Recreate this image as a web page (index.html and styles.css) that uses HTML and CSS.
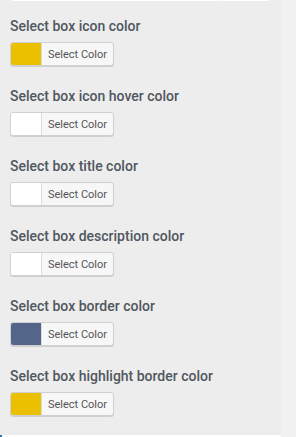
FILE: index.html
```html
<!DOCTYPE html>
<html lang="en">
<head>
    <meta charset="UTF-8">
    <meta name="viewport" content="width=device-width, initial-scale=1.0">
    <title>Select box colors</title>
    <link rel="stylesheet" href="styles.css">
</head>
<body>
    <div class="page">
        <div class="panel">
            <div class="top-line">
                <span class="seg seg-a"></span>
                <span class="seg seg-b"></span>
            </div>

            <div class="field">
                <h3>Select box icon color</h3>
                <button class="color-result" type="button">
                    <span class="swatch swatch-yellow"></span>
                    <span class="label">Select Color</span>
                </button>
            </div>

            <div class="field">
                <h3>Select box icon hover color</h3>
                <button class="color-result" type="button">
                    <span class="swatch"></span>
                    <span class="label">Select Color</span>
                </button>
            </div>

            <div class="field">
                <h3>Select box title color</h3>
                <button class="color-result" type="button">
                    <span class="swatch"></span>
                    <span class="label">Select Color</span>
                </button>
            </div>

            <div class="field">
                <h3>Select box description color</h3>
                <button class="color-result" type="button">
                    <span class="swatch"></span>
                    <span class="label">Select Color</span>
                </button>
            </div>

            <div class="field">
                <h3>Select box border color</h3>
                <button class="color-result" type="button">
                    <span class="swatch swatch-blue"></span>
                    <span class="label">Select Color</span>
                </button>
            </div>

            <div class="field">
                <h3>Select box highlight border color</h3>
                <button class="color-result" type="button">
                    <span class="swatch swatch-yellow"></span>
                    <span class="label">Select Color</span>
                </button>
            </div>
        </div>
        <div class="bottom-line"><span class="dot"></span></div>
    </div>
</body>
</html>
```

FILE: styles.css
```css
body {
    margin: 0;
    background-color: #f1f1f1;
    font-family: Roboto, "Liberation Sans", Arial, sans-serif;
}
.page {
    width: 281px;
}
.panel {
    background-color: #ededed;
    height: 435px;
    box-sizing: border-box;
    padding: 0 10px;
}
.top-line {
    display: flex;
    height: 1px;
    margin-left: 2px;
    margin-bottom: 15px;
}
.seg {
    display: block;
    height: 1px;
    background-color: #fff;
}
.seg-a {
    width: 210px;
}
.seg-b {
    width: 46px;
    margin-left: 1px;
}
.field {
    margin-bottom: 20px;
}
.field h3 {
    margin: 0 0 6px;
    font-size: 14px;
    line-height: 20px;
    font-weight: 500;
    color: #50575e;
}
.color-result {
    display: flex;
    align-items: stretch;
    height: 24px;
    width: 104px;
    padding: 0;
    margin: 0;
    border: 1px solid #d0d0d0;
    border-radius: 3px;
    background-color: #f7f7f7;
    box-shadow: 0 1px 0 #cfcfcf;
    overflow: hidden;
    cursor: pointer;
    font-family: Roboto, "Liberation Sans", Arial, sans-serif;
}
.swatch {
    display: block;
    width: 30px;
    flex: none;
    background-color: #fff;
}
.swatch-yellow {
    background-color: #ebc000;
}
.swatch-blue {
    background-color: #536589;
}
.label {
    flex: 1;
    display: flex;
    align-items: center;
    justify-content: center;
    border-left: 1px solid #dcdcdc;
    font-size: 11px;
    color: #555;
}
.bottom-line {
    height: 2px;
    background-color: #fff;
}
.dot {
    display: block;
    width: 2px;
    height: 2px;
    background-color: #2271b1;
}
```
